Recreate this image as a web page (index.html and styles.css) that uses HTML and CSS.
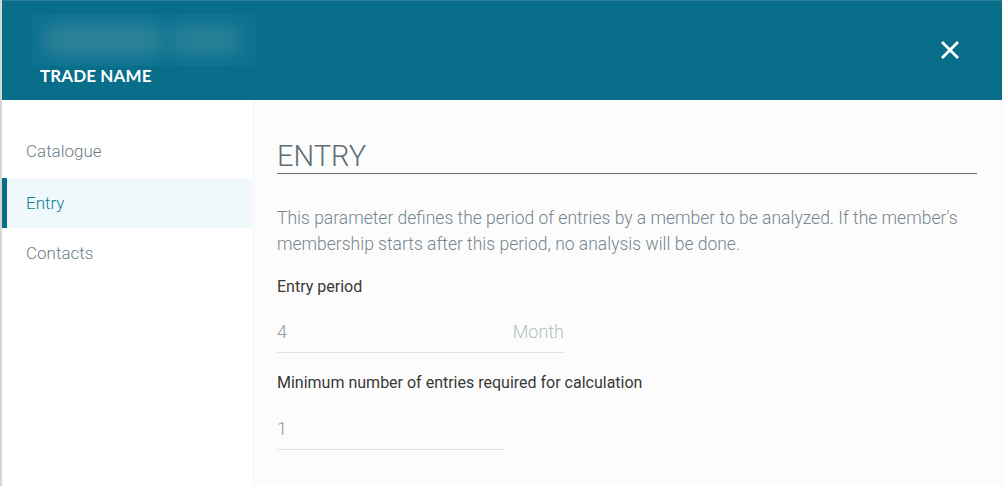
FILE: index.html
```html
<!DOCTYPE html>
<html>
<head>
<meta charset="utf-8">
<link rel="stylesheet" href="styles.css">
</head>
<body>
<div class="frame">
  <header class="header">
    <div class="ident">
      <div class="blurred"><span class="blob b1"></span><span class="blob b2"></span></div>
      <div class="trade">TRADE NAME</div>
    </div>
    <button class="close" aria-label="Close">
      <svg width="20" height="20" viewBox="0 0 20 20"><path d="M2 2 L18 18 M18 2 L2 18" stroke="#fff" stroke-width="2.8" stroke-linecap="butt" fill="none"/></svg>
    </button>
  </header>
  <div class="body">
    <nav class="sidebar">
      <div class="nav-item first">Catalogue</div>
      <div class="nav-item active">Entry</div>
      <div class="nav-item">Contacts</div>
    </nav>
    <main class="main">
      <h1 class="title">ENTRY</h1>
      <p class="desc">This parameter defines the period of entries by a member to be analyzed. If the member's membership starts after this period, no analysis will be done.</p>
      <div class="label first">Entry period</div>
      <div class="field wide first"><span class="value">4</span><span class="unit">Month</span></div>
      <div class="label">Minimum number of entries required for calculation</div>
      <div class="field narrow"><span class="value">1</span></div>
    </main>
  </div>
</div>
</body>
</html>
```
FILE: styles.css
```css
* { box-sizing: border-box; }
html, body { margin: 0; padding: 0; }
body {
  width: 1004px;
  height: 486px;
  background: #fdfdfd;
  font-family: Roboto, "Liberation Sans", sans-serif;
  overflow: hidden;
}
.frame {
  width: 1002px;
  height: 486px;
  border-left: 2px solid #d6d6d6;
  display: flex;
  flex-direction: column;
}
.header {
  height: 100px;
  background: #086e8a;
  border-top: 1px solid #2a7f97;
  display: flex;
  justify-content: space-between;
  padding: 13px 42px 0 30px;
}
.ident { display: flex; flex-direction: column; }
.blurred {
  width: 224px;
  height: 52px;
  background: #0b7290;
  display: flex;
  align-items: center;
  padding: 0 12px;
  gap: 6px;
  overflow: hidden;
}
.blob {
  height: 30px;
  background: #2f8299;
  filter: blur(9px);
  border-radius: 10px;
}
.b1 { width: 120px; }
.b2 { width: 70px; opacity: .85; }
.trade {
  margin-left: 8px;
  font-family: Lato, "Open Sans", sans-serif;
  font-weight: 700;
  font-size: 17px;
  line-height: 20px;
  color: #fff;
  letter-spacing: 0.1px;
}
.close {
  margin-top: 26px;
  width: 20px;
  height: 20px;
  padding: 0;
  border: 0;
  background: none;
  display: block;
}
.close svg { display: block; }
.body { flex: 1; display: flex; }
.sidebar {
  width: 250px;
  background: #fff;
  padding-top: 26px;
}
.nav-item {
  height: 50px;
  line-height: 50px;
  padding-left: 24px;
  font-size: 17px;
  font-weight: 300;
  color: #6d7c87;
}
.nav-item.first { height: 52px; }
.nav-item.active {
  background: #eff9fb;
  color: #137a94;
  border-left: 5px solid #086e8a;
  padding-left: 19px;
  border-radius: 0 5px 5px 0;
}
.main {
  flex: 1;
  background: #fcfcfc;
  padding: 39px 25px 0 25px;
  box-shadow: inset 6px 0 6px -6px rgba(0,0,0,0.04);
}
.title {
  margin: 0;
  font-size: 29px;
  line-height: 34px;
  font-weight: 300;
  color: #5d6b75;
  border-bottom: 1px solid #5f6a72;
}
.desc {
  margin: 31px 0 0;
  font-size: 17.5px;
  line-height: 26px;
  font-weight: 300;
  color: #76858f;
}
.label {
  margin-top: 20px;
  font-size: 16px;
  line-height: 20px;
  color: #383838;
}
.field {
  margin-top: 24px;
  display: flex;
  justify-content: space-between;
  font-size: 18px;
  line-height: 24px;
  font-weight: 300;
  padding-bottom: 8px;
  border-bottom: 1px solid #e3e3e3;
}
.field.first { margin-top: 23px; }
.field.wide { width: 287px; }
.field.narrow { width: 227px; }
.value { color: #8f9ba3; }
.unit { color: #b3bcc3; }
```
